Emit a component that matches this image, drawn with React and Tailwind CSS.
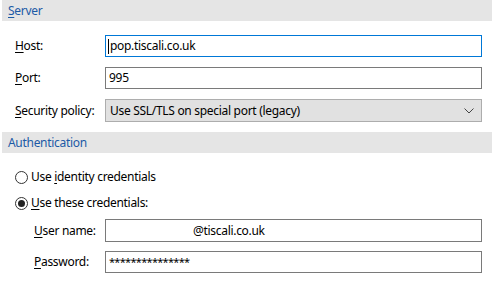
import React from "react";

const font = { fontFamily: '"Noto Sans", "Open Sans", sans-serif' };

function U({ children }) {
  return <span className="underline underline-offset-[2px] decoration-1">{children}</span>;
}

function Header({ children }) {
  return (
    <div className="ml-[2px] w-[490px] h-[21px] bg-[#e5e5e5] flex items-center pl-[6px] text-[12px] text-[#1c5aa6]">
      {children}
    </div>
  );
}

function Row({ label, children, labelX = 15 }) {
  return (
    <div className="flex items-center">
      <div className={labelX === 15 ? "w-[105px] pl-[15px]" : "w-[105px] pl-[34px]"}>{label}</div>
      {children}
    </div>
  );
}

function Radio({ checked }) {
  return (
    <div className="w-[13px] h-[13px] rounded-full border border-[#333] bg-white flex items-center justify-center">
      {checked && <div className="w-[7px] h-[7px] rounded-full bg-[#222]" />}
    </div>
  );
}

export default function App() {
  return (
    <div className="w-[495px] h-[281px] bg-white text-[12px] tracking-[-0.3px] text-black overflow-hidden flex flex-col" style={font}>
      <Header>
        <span><U>S</U>erver</span>
      </Header>
      <div className="mt-[14px] flex flex-col gap-[10px]">
        <Row label={<span><U>H</U>ost:</span>}>
          <div className="w-[377px] h-[22px] border border-[#0078d7] flex items-center pl-[2px]">
            <span className="w-px h-[15px] bg-black mr-[1px]" />
            <span>pop.tiscali.co.uk</span>
          </div>
        </Row>
        <Row label={<span><U>P</U>ort:</span>}>
          <div className="w-[377px] h-[22px] border border-[#7a7a7a] flex items-center pl-[3px]">995</div>
        </Row>
        <Row label={<span><U>S</U>ecurity policy:</span>}>
          <div className="w-[377px] h-[23px] border border-[#adadad] bg-[#e1e1e1] flex items-center pl-[4px] pr-[7px] justify-between">
            <span>Use SSL/TLS on special port (legacy)</span>
            <svg width="10" height="6" viewBox="0 0 10 6">
              <path d="M0.5 0.5 L5 5 L9.5 0.5" fill="none" stroke="#444" strokeWidth="1" />
            </svg>
          </div>
        </Row>
      </div>
      <div className="mt-[10px]">
        <Header>Authentication</Header>
      </div>
      <div className="mt-[14px] flex flex-col gap-[6px] pl-[15px]">
        <div className="h-[20px] flex items-center gap-[3px]">
          <Radio />
          <span>Use <U>i</U>dentity credentials</span>
        </div>
        <div className="h-[20px] flex items-center gap-[3px]">
          <Radio checked />
          <span><U>U</U>se these credentials:</span>
        </div>
      </div>
      <div className="mt-[6px] flex flex-col gap-[9px]">
        <Row labelX={34} label={<span><U>U</U>ser name:</span>}>
          <div className="w-[377px] h-[23px] border border-[#7a7a7a] flex items-center pl-[87px]">@tiscali.co.uk</div>
        </Row>
        <Row labelX={34} label={<span><U>P</U>assword:</span>}>
          <div className="w-[377px] h-[22px] border border-[#7a7a7a] flex items-center pl-[3px] text-[11px] tracking-[-0.7px]">***************</div>
        </Row>
      </div>
    </div>
  );
}
